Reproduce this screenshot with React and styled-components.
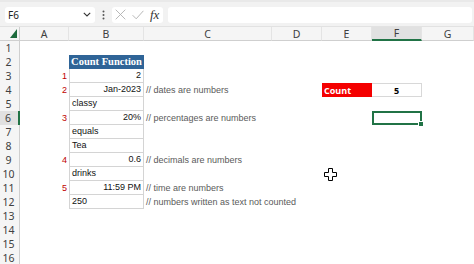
import React from 'react';
import styled, { createGlobalStyle, css } from 'styled-components';

const Global = createGlobalStyle`
  html, body { margin: 0; padding: 0; background: #fff; }
  body { width: 474px; height: 264px; overflow: hidden; font-family: "Liberation Sans", Arial, sans-serif; }
  #root { width: 474px; height: 264px; }
`;

const Frame = styled.div`
  width: 474px;
  height: 264px;
  display: flex;
  flex-direction: column;
  overflow: hidden;
  background: #fff;
  position: relative;
`;

const FormulaBar = styled.div`
  flex: none;
  height: 27px;
  display: flex;
  align-items: center;
  padding: 1px 2px 0 5px;
  box-sizing: border-box;
  background: #f2f2f2;
  border-top: 2px solid #e9e9e9;
  border-bottom: 1px solid #e2e2e2;
`;

const NameBox = styled.div`
  width: 90px;
  height: 16px;
  box-sizing: border-box;
  background: #fff;
  border-radius: 3px;
  display: flex;
  align-items: center;
  justify-content: space-between;
  padding: 0 4px 0 3px;
  font-family: "Noto Sans", "Open Sans", sans-serif;
  font-size: 10px;
  color: #222;
`;

const Dots = styled.div`
  width: 17px;
  display: flex;
  justify-content: center;
`;

const FxBox = styled.div`
  width: 51px;
  height: 16px;
  box-sizing: border-box;
  background: #fff;
  border-radius: 3px;
  display: flex;
  align-items: center;
  gap: 6px;
  padding-left: 3px;
`;

const FxLabel = styled.span`
  font-family: "Liberation Serif", "Times New Roman", serif;
  font-style: italic;
  font-size: 13px;
  color: #333;
  line-height: 1;
`;

const FormulaInput = styled.div`
  flex: 1;
  height: 16px;
  margin-left: 5px;
  background: #fff;
  border-radius: 3px;
`;

const Sheet = styled.div`
  flex: 1;
  display: grid;
  grid-template-columns: 20px 49px 75px 128px 50px 50px 50px 52px;
  grid-auto-rows: 14px;
  position: relative;
`;

const Corner = styled.div`
  background: #f5f5f5;
  border-right: 1px solid #cfcfcf;
  border-bottom: 1px solid #cfcfcf;
  box-sizing: border-box;
  display: flex;
  align-items: flex-end;
  justify-content: flex-end;
  padding: 0 2px 2px 0;
`;

const ColHead = styled.div`
  box-sizing: border-box;
  display: flex;
  align-items: center;
  justify-content: center;
  font-family: "Noto Sans", "Open Sans", sans-serif;
  font-size: 10.5px;
  color: #404040;
  background: ${(p) => (p.$active ? '#e1e1e1' : '#f5f5f5')};
  border-right: 1px solid #e4e4e4;
  border-bottom: ${(p) => (p.$active ? '2px solid #217346' : '1px solid #cfcfcf')};
`;

const RowHead = styled.div`
  box-sizing: border-box;
  display: flex;
  align-items: center;
  justify-content: center;
  font-family: "Noto Sans", "Open Sans", sans-serif;
  font-size: 10.5px;
  color: #404040;
  padding-right: 2px;
  background: ${(p) => (p.$active ? '#e1e1e1' : '#f5f5f5')};
  border-right: ${(p) => (p.$active ? '2px solid #217346' : '1px solid #cfcfcf')};
`;

const kindStyles = {
  title: css`
    background: #2f6497;
    color: #fff;
    font-family: "Liberation Serif", "Times New Roman", serif;
    font-weight: bold;
    font-size: 10.5px;
    justify-content: center;
    padding: 0;
  `,
  marker: css`
    color: #c00000;
    justify-content: flex-end;
  `,
  value: css`
    color: #111;
    border-left: 1px solid #d4d4d4;
    border-right: 1px solid #d4d4d4;
    border-bottom: 1px solid #d4d4d4;
  `,
  note: css`
    color: #5a5a5a;
    white-space: nowrap;
    overflow: visible;
  `,
  badge: css`
    background: #f40000;
    color: #fff;
    font-family: "Open Sans", "Noto Sans", sans-serif;
    font-weight: bold;
    font-size: 9px;
  `,
  result: css`
    color: #000;
    font-family: "Open Sans", "Noto Sans", sans-serif;
    font-weight: bold;
    font-size: 9px;
    justify-content: center;
    border-top: 1px solid #d8d8d8;
    border-right: 1px solid #d8d8d8;
    border-bottom: 1px solid #d8d8d8;
  `,
  empty: css``,
};

const Cell = styled.div`
  box-sizing: border-box;
  display: flex;
  align-items: center;
  padding: 0 2px;
  font-size: 9px;
  line-height: 1;
  position: relative;
  justify-content: ${(p) => (p.$align === 'right' ? 'flex-end' : 'flex-start')};
  ${(p) => kindStyles[p.$kind || 'empty']}
  ${(p) =>
    p.$selected &&
    css`
      box-shadow: inset 0 0 0 2px #217346;
    `}
`;

const FillHandle = styled.span`
  position: absolute;
  right: -2px;
  bottom: -2px;
  width: 4px;
  height: 4px;
  background: #217346;
  border: 1px solid #fff;
  box-sizing: content-box;
`;

const Pointer = styled.svg`
  position: absolute;
  left: 324px;
  top: 141px;
`;

const COLS = ['A', 'B', 'C', 'D', 'E', 'F', 'G'];

const cells = {
  B2: { text: 'Count Function', kind: 'title' },
  A3: { text: '1', kind: 'marker' },
  B3: { text: '2', kind: 'value', align: 'right' },
  A4: { text: '2', kind: 'marker' },
  B4: { text: 'Jan-2023', kind: 'value', align: 'right' },
  C4: { text: '// dates are numbers', kind: 'note' },
  E4: { text: 'Count', kind: 'badge' },
  F4: { text: '5', kind: 'result' },
  B5: { text: 'classy', kind: 'value' },
  A6: { text: '3', kind: 'marker' },
  B6: { text: '20%', kind: 'value', align: 'right' },
  C6: { text: '// percentages are numbers', kind: 'note' },
  B7: { text: 'equals', kind: 'value' },
  B8: { text: 'Tea', kind: 'value' },
  A9: { text: '4', kind: 'marker' },
  B9: { text: '0.6', kind: 'value', align: 'right' },
  C9: { text: '// decimals are numbers', kind: 'note' },
  B10: { text: 'drinks', kind: 'value' },
  A11: { text: '5', kind: 'marker' },
  B11: { text: '11:59 PM', kind: 'value', align: 'right' },
  C11: { text: '// time are numbers', kind: 'note' },
  B12: { text: '250', kind: 'value' },
  C12: { text: '// numbers written as text not counted', kind: 'note' },
};

const ACTIVE_COL = 'F';
const ACTIVE_ROW = 6;

export default function App() {
  const rows = Array.from({ length: 16 }, (_, i) => i + 1);
  return (
    <Frame>
      <Global />
      <FormulaBar>
        <NameBox>
          <span>F6</span>
          <svg width="8" height="5" viewBox="0 0 8 5">
            <path d="M0.8 0.8 L4 4 L7.2 0.8" fill="none" stroke="#333" strokeWidth="1.1" />
          </svg>
        </NameBox>
        <Dots>
          <svg width="3" height="10" viewBox="0 0 3 10">
            <circle cx="1.5" cy="1.5" r="1" fill="#555" />
            <circle cx="1.5" cy="5" r="1" fill="#555" />
            <circle cx="1.5" cy="8.5" r="1" fill="#555" />
          </svg>
        </Dots>
        <FxBox>
          <svg width="11" height="11" viewBox="0 0 11 11">
            <path d="M0.7 0.7 L10.3 10.3 M10.3 0.7 L0.7 10.3" stroke="#b0b0b0" strokeWidth="0.9" fill="none" />
          </svg>
          <svg width="12" height="10" viewBox="0 0 12 10">
            <path d="M0.6 5.2 L4.2 8.8 L11.4 0.8" stroke="#b0b0b0" strokeWidth="0.9" fill="none" />
          </svg>
          <FxLabel>fx</FxLabel>
        </FxBox>
        <FormulaInput />
      </FormulaBar>
      <Sheet>
        <Corner>
          <svg width="7" height="9" viewBox="0 0 7 9">
            <polygon points="7,0 7,9 0,9" fill="#1d6b3d" />
          </svg>
        </Corner>
        {COLS.map((c) => (
          <ColHead key={c} $active={c === ACTIVE_COL}>
            {c}
          </ColHead>
        ))}
        {rows.map((r) => (
          <React.Fragment key={r}>
            <RowHead $active={r === ACTIVE_ROW}>{r}</RowHead>
            {COLS.map((c) => {
              const id = c + r;
              const spec = cells[id] || {};
              const selected = c === ACTIVE_COL && r === ACTIVE_ROW;
              return (
                <Cell key={id} $kind={spec.kind} $align={spec.align} $selected={selected}>
                  {spec.text}
                  {selected && <FillHandle />}
                </Cell>
              );
            })}
          </React.Fragment>
        ))}
        <Pointer width="13" height="13" viewBox="0 0 13 13">
          <polygon
            points="4.5,0.5 8.5,0.5 8.5,4.5 12.5,4.5 12.5,8.5 8.5,8.5 8.5,12.5 4.5,12.5 4.5,8.5 0.5,8.5 0.5,4.5 4.5,4.5"
            fill="#fff"
            stroke="#000"
            strokeWidth="1"
          />
        </Pointer>
      </Sheet>
    </Frame>
  );
}
